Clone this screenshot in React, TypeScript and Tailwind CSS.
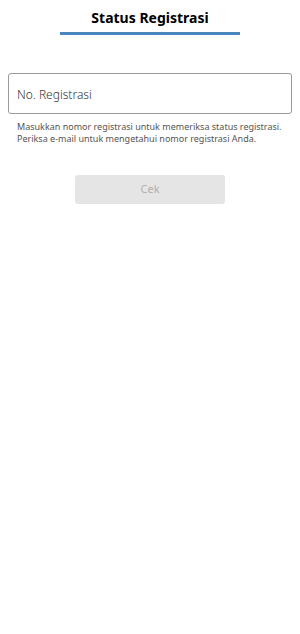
export default function App() {
  return (
    <div className="min-h-[634px] w-[300px] bg-white font-['Noto_Sans',sans-serif]">
      {/* Header */}
      <div className="flex flex-col items-center pt-[8px]">
        <h1 className="text-[14px] font-bold leading-[20px] text-black">Status Registrasi</h1>
        <div className="mt-[4px] h-[3px] w-[180px] bg-[#4a86be]" />
      </div>

      {/* Form */}
      <div className="mt-[38px] px-[8px]">
        <div className="flex h-[41px] items-center rounded-[3px] border border-[#9a9a9a] px-[8px] pt-[3px]">
          <span className="text-[12px] font-light text-[#333]">No. Registrasi</span>
        </div>
        <p className="mt-[7px] px-[9px] text-[9px] leading-[12px] text-[#555]">
          Masukkan nomor registrasi untuk memeriksa status registrasi.
          <br />
          Periksa e-mail untuk mengetahui nomor registrasi Anda.
        </p>
      </div>

      <div className="mt-[30px] flex justify-center">
        <button className="h-[29px] w-[150px] rounded-[3px] bg-[#e5e5e5] text-[11px] text-[#b0b0b0]">
          Cek
        </button>
      </div>
    </div>
  );
}
